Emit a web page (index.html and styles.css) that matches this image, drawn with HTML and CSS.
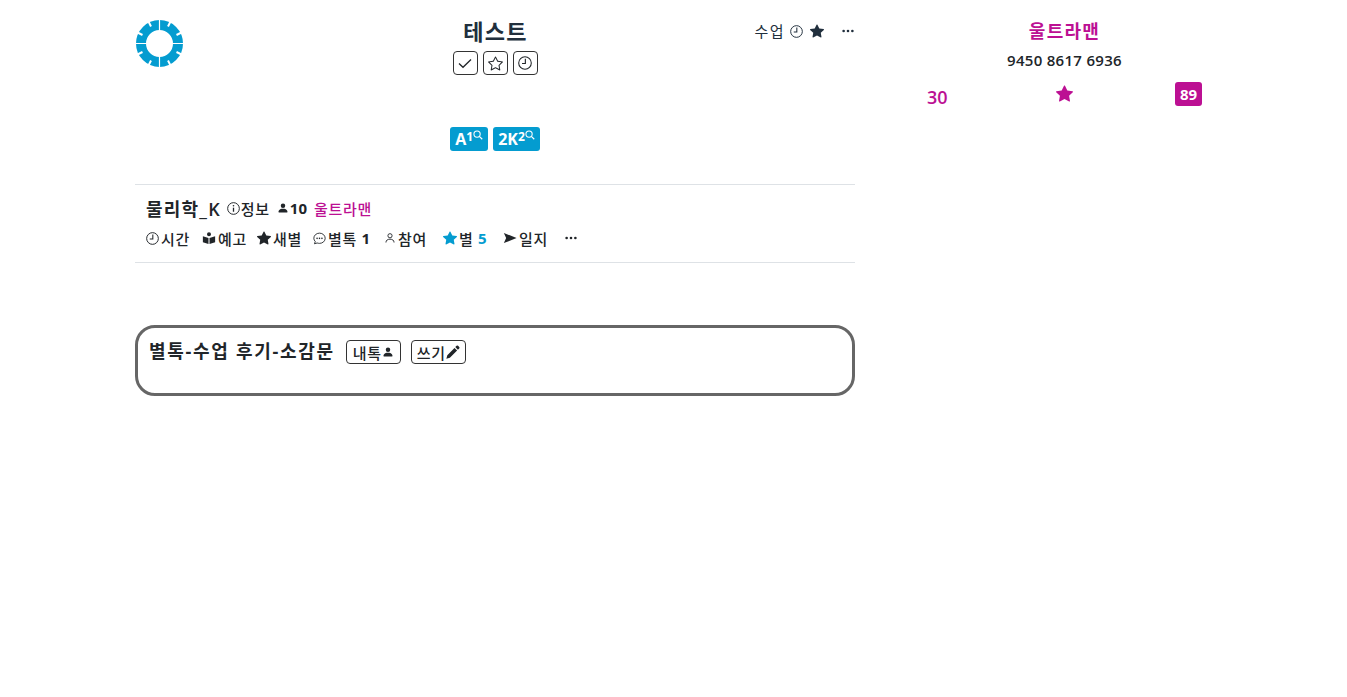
FILE: index.html
```html
<!DOCTYPE html>
<html lang="ko">
<head>
    <meta charset="UTF-8">
    <meta name="viewport" content="width=device-width, initial-scale=1.0">
    <title>테스트</title>
    <link rel="stylesheet" href="styles.css">
</head>
<body>
    <svg class="icon-defs" width="0" height="0">
        <symbol id="i-star-fill" viewBox="0 0 16 16"><path fill="currentColor" d="M3.612 15.443c-.386.198-.824-.149-.746-.592l.83-4.73L.173 6.765c-.329-.314-.158-.888.283-.95l4.898-.696L7.538.792c.197-.39.73-.39.927 0l2.184 4.327 4.898.696c.441.062.612.636.282.95l-3.522 3.356.83 4.73c.078.443-.36.79-.746.592L8 13.187l-4.389 2.256z"/></symbol>
        <symbol id="i-star" viewBox="0 0 16 16"><path fill="currentColor" d="M2.866 14.85c-.078.444.36.791.746.593l4.39-2.256 4.389 2.256c.386.198.824-.149.746-.592l-.83-4.73 3.522-3.356c.33-.314.16-.888-.282-.95l-4.898-.696L8.465.792a.513.513 0 0 0-.927 0L5.354 5.12l-4.898.696c-.441.062-.612.636-.283.95l3.523 3.356-.83 4.73zm4.905-2.767-3.686 1.894.694-3.957a.565.565 0 0 0-.163-.505L1.71 6.745l4.052-.576a.525.525 0 0 0 .393-.288L8 2.223l1.847 3.658a.525.525 0 0 0 .393.288l4.052.575-2.906 2.77a.565.565 0 0 0-.163.506l.694 3.957-3.686-1.894a.503.503 0 0 0-.461 0z"/></symbol>
        <symbol id="i-clock" viewBox="0 0 16 16"><circle cx="8" cy="8" r="7.2" fill="none" stroke="currentColor" stroke-width="1.200"/><path d="M8.400 3.200V8.600H4.600" fill="none" stroke="currentColor" stroke-width="1.300"/></symbol>
        <symbol id="i-dots" viewBox="0 0 16 16"><path fill="currentColor" d="M3 9.500a1.500 1.500 0 1 1 0-3 1.500 1.500 0 0 1 0 3zm5 0a1.500 1.500 0 1 1 0-3 1.500 1.500 0 0 1 0 3zm5 0a1.500 1.500 0 1 1 0-3 1.500 1.500 0 0 1 0 3z"/></symbol>
        <symbol id="i-check" viewBox="0 0 16 16"><path d="M2 8.500l4 3.800 8-7.800" fill="none" stroke="currentColor" stroke-width="1.300"/></symbol>
        <symbol id="i-search" viewBox="0 0 16 16"><circle cx="6.500" cy="6.500" r="5" fill="none" stroke="currentColor" stroke-width="1.700"/><path d="M10.200 10.200l4.600 4.600" fill="none" stroke="currentColor" stroke-width="1.900"/></symbol>
        <symbol id="i-info" viewBox="0 0 16 16"><circle cx="8" cy="8" r="7.200" fill="none" stroke="currentColor" stroke-width="1.200"/><path d="M8 7v5" stroke="currentColor" stroke-width="1.600"/><circle cx="8" cy="4.600" r="1" fill="currentColor"/></symbol>
        <symbol id="i-person-fill" viewBox="0 0 16 16"><path fill="currentColor" d="M3 14s-1 0-1-1 1-4 6-4 6 3 6 4-1 1-1 1H3zm5-6a3 3 0 1 0 0-6 3 3 0 0 0 0 6z"/></symbol>
        <symbol id="i-person" viewBox="0 0 16 16"><circle cx="8" cy="5" r="2.800" fill="none" stroke="currentColor" stroke-width="1.200"/><path d="M2.600 14c0-3 2.200-4.400 5.400-4.400s5.400 1.400 5.400 4.400" fill="none" stroke="currentColor" stroke-width="1.200"/></symbol>
        <symbol id="i-book" viewBox="0 0 16 16"><path fill="currentColor" d="M8 1.500a2.300 2.300 0 1 1 0 4.600 2.300 2.300 0 0 1 0-4.600zM1 6l6.400 2v6.800L1 12.800V6zm14 0v6.800l-6.400 2V8L15 6z"/></symbol>
        <symbol id="i-chat" viewBox="0 0 16 16"><path d="M8 1.400c3.900 0 7 2.800 7 6.300S11.900 14 8 14c-1 0-2-.2-2.900-.5L1.800 14.500l1-2.800C1.700 10.700 1 9.300 1 7.700 1 4.200 4.100 1.400 8 1.400z" fill="none" stroke="currentColor" stroke-width="1.100"/><path fill="currentColor" d="M5 8.800a1 1 0 1 1 0-2 1 1 0 0 1 0 2zm3 0a1 1 0 1 1 0-2 1 1 0 0 1 0 2zm3 0a1 1 0 1 1 0-2 1 1 0 0 1 0 2z"/></symbol>
        <symbol id="i-send" viewBox="0 0 16 16"><path fill="currentColor" d="M1 2.200L15.500 8 1 13.800 3.600 8z"/></symbol>
        <symbol id="i-pencil" viewBox="0 0 16 16"><path fill="currentColor" d="M12.100.900a1.200 1.200 0 0 1 1.700 0l1.300 1.300a1.200 1.200 0 0 1 0 1.700l-1.500 1.500-3-3 1.500-1.500zM9.700 3.300l3 3-8.300 8.300-4 1.200 1.100-4.200 8.200-8.300z"/></symbol>
    </svg>

    <div class="page">
        <div class="main">
            <!-- top header -->
            <div class="head">
                <svg class="logo" viewBox="0 0 47 47" width="47" height="47">
                    <circle cx="23.500" cy="23.500" r="18.500" fill="none" stroke="#049cd0" stroke-width="10"/>
                    <path d="M23.500 0v47M0 23.500h47" stroke="#fff" stroke-width="1.200"/>
                    <path d="M34.500 1.500L32 6.500M45.500 12.500L40.500 15M45.500 34.500L40.500 32M34.500 45.500L32 40.500M12.500 45.500L15 40.500M1.500 34.500L6.500 32M1.500 12.500L6.500 15M12.500 1.500L15 6.500" stroke="#fff" stroke-width="2"/>
                </svg>
                <div class="head-center">
                    <h1 class="title">테스트</h1>
                    <div class="tool-btns">
                        <span class="tool-btn"><svg class="ic16"><use href="#i-check"/></svg></span>
                        <span class="tool-btn"><svg class="ic15"><use href="#i-star"/></svg></span>
                        <span class="tool-btn"><svg class="ic14"><use href="#i-clock"/></svg></span>
                    </div>
                </div>
                <div class="head-right">
                    <span class="class-label">수업</span>
                    <svg class="ic13"><use href="#i-clock"/></svg>
                    <svg class="ic14 star-gap"><use href="#i-star-fill"/></svg>
                    <svg class="ic14 dots-gap"><use href="#i-dots"/></svg>
                </div>
            </div>

            <div class="badges">
                <span class="badge">A<sup>1</sup><svg class="ic10"><use href="#i-search"/></svg></span>
                <span class="badge">2K<sup>2</sup><svg class="ic10"><use href="#i-search"/></svg></span>
            </div>

            <!-- subject menu -->
            <div class="subject">
                <div class="subject-top">
                    <span class="subject-name">물리학_K</span>
                    <span class="item"><svg class="ic13"><use href="#i-info"/></svg>정보</span>
                    <span class="item"><svg class="ic12"><use href="#i-person-fill"/></svg><b class="num">10</b></span>
                    <span class="owner">울트라맨</span>
                </div>
                <div class="subject-menu">
                    <span class="item w-time"><svg class="ic13"><use href="#i-clock"/></svg>시간</span>
                    <span class="item w-book"><svg class="ic14"><use href="#i-book"/></svg>예고</span>
                    <span class="item w-new"><svg class="ic14"><use href="#i-star-fill"/></svg>새별</span>
                    <span class="item w-talk"><svg class="ic13"><use href="#i-chat"/></svg>별톡 <b class="num">1</b></span>
                    <span class="item w-join"><svg class="ic12"><use href="#i-person"/></svg>참여</span>
                    <span class="item w-star"><svg class="ic14 blue"><use href="#i-star-fill"/></svg>별 <b class="num blue">5</b></span>
                    <span class="item w-log"><svg class="ic14"><use href="#i-send"/></svg>일지</span>
                    <svg class="ic14"><use href="#i-dots"/></svg>
                </div>
            </div>

            <!-- talk box -->
            <div class="talk-box">
                <div class="talk-head">
                    <h2 class="talk-title">별톡-수업 후기-소감문</h2>
                    <span class="talk-btn">내톡<svg class="ic12"><use href="#i-person-fill"/></svg></span>
                    <span class="talk-btn">쓰기<svg class="ic14"><use href="#i-pencil"/></svg></span>
                </div>
            </div>
        </div>

        <div class="side">
            <div class="side-name">울트라맨</div>
            <div class="side-code">9450 8617 6936</div>
            <div class="side-stats">
                <span class="side-num">30</span>
                <svg class="side-star"><use href="#i-star-fill"/></svg>
                <span class="side-badge">89</span>
            </div>
        </div>
    </div>
</body>
</html>
```

FILE: styles.css
```css
body {
    margin: 0;
    background: #fff;
    color: #212529;
    font-family: "Open Sans", "Noto Sans CJK KR", sans-serif;
    font-size: 15px;
}

.icon-defs {
    display: block;
    height: 0;
}

.ic10 { width: 10px; height: 10px; }
.ic12 { width: 12px; height: 12px; }
.ic13 { width: 13px; height: 13px; }
.ic14 { width: 14px; height: 14px; }
.ic15 { width: 15px; height: 15px; }
.ic16 { width: 16px; height: 16px; }

.blue {
    color: #049cd0;
}

.page {
    display: flex;
    padding-left: 135px;
}

.main {
    width: 720px;
}

/* header */
.head {
    display: grid;
    grid-template-columns: 1fr auto 1fr;
    padding-top: 19px;
}

.logo {
    display: block;
    margin: 1px 0 0 1px;
}

.head-center {
    display: flex;
    flex-direction: column;
    align-items: center;
}

.title {
    margin: 0;
    padding-left: 1px;
    font-size: 22px;
    font-weight: 700;
    line-height: 24px;
    letter-spacing: 1.200px;
    color: #212f3d;
}

.tool-btns {
    display: flex;
    gap: 5px;
    margin-top: 8px;
}

.tool-btn {
    display: flex;
    align-items: center;
    justify-content: center;
    width: 23px;
    height: 22px;
    border: 1px solid #333;
    border-radius: 4px;
}

.head-right {
    display: flex;
    justify-content: flex-end;
    align-items: center;
    align-self: start;
    height: 24px;
    color: #212f3d;
}

.class-label {
    margin: -2px 5px 0 0;
    letter-spacing: 1.500px;
}

.star-gap {
    margin-left: 7px;
}

.dots-gap {
    margin-left: 17px;
}

.badges {
    display: flex;
    justify-content: center;
    gap: 5px;
    margin-top: 52px;
}

.badge {
    display: flex;
    align-items: flex-start;
    height: 24px;
    padding: 0 5px;
    border-radius: 3px;
    background: #049cd0;
    color: #fff;
    font-size: 16px;
    font-weight: 700;
    line-height: 25px;
}

.badge sup {
    font-size: 12px;
    line-height: 20px;
    font-weight: 700;
    vertical-align: baseline;
}

.badge svg {
    margin-top: 3px;
}

/* subject */
.subject {
    margin-top: 33px;
    padding: 9px 11px 10px;
    border-top: 1px solid #dee2e6;
    border-bottom: 1px solid #dee2e6;
}

.subject-top,
.subject-menu {
    display: flex;
    align-items: center;
}

.subject-top {
    height: 28px;
}

.subject-menu {
    height: 28px;
    margin-top: 2px;
}

.subject-name {
    margin-right: 6px;
    font-size: 18px;
    font-weight: 600;
    letter-spacing: 1.200px;
}

.item {
    display: inline-flex;
    align-items: center;
    white-space: pre;
    font-weight: 500;
    letter-spacing: .7px;
}

.subject-top .item {
    margin-right: 7px;
}

.item svg {
    margin-right: 2px;
}

.subject-top .item svg {
    margin-right: 1px;
}

.num {
    font-weight: 700;
    letter-spacing: 0;
}

.owner {
    color: #bc1093;
    font-weight: 500;
    letter-spacing: .7px;
}

.w-time { width: 56px; }
.w-book { width: 55px; }
.w-new { width: 56px; }
.w-talk { width: 71px; }
.w-join { width: 59px; }
.w-star { width: 60px; }
.w-log { width: 61px; }

/* talk box */
.talk-box {
    box-sizing: border-box;
    height: 71px;
    margin-top: 62px;
    padding: 12px 11px;
    border: 3px solid #666;
    border-radius: 20px;
}

.talk-head {
    display: flex;
    align-items: flex-start;
}

.talk-title {
    margin: 0 11px 0 0;
    font-size: 18px;
    font-weight: 700;
    line-height: 22px;
    letter-spacing: 1.700px;
}

.talk-btn {
    display: flex;
    align-items: center;
    justify-content: center;
    box-sizing: border-box;
    width: 55px;
    height: 24px;
    margin-right: 10px;
    border: 1px solid #333;
    border-radius: 4px;
    font-weight: 500;
    letter-spacing: .7px;
}

/* side column */
.side {
    box-sizing: border-box;
    width: 297px;
    margin-left: 60px;
    padding: 19px 10px 0 12px;
    text-align: center;
}

.side-name {
    color: #bc1093;
    font-size: 18px;
    font-weight: 600;
    line-height: 24px;
    letter-spacing: 1.300px;
}

.side-code {
    margin-top: 7px;
    font-size: 15px;
    font-weight: 600;
    line-height: 20px;
    letter-spacing: .3px;
}

.side-stats {
    display: grid;
    grid-template-columns: 1fr auto 1fr;
    align-items: start;
    margin-top: 12px;
    color: #bc1093;
}

.side-num {
    justify-self: start;
    margin-top: 3px;
    font-size: 18px;
    font-weight: 600;
    line-height: 24px;
}

.side-star {
    margin-top: 3px;
    width: 17px;
    height: 17px;
}

.side-badge {
    justify-self: end;
    width: 27px;
    height: 24px;
    border-radius: 3px;
    background: #bc1093;
    color: #fff;
    font-weight: 700;
    line-height: 25px;
}
```
